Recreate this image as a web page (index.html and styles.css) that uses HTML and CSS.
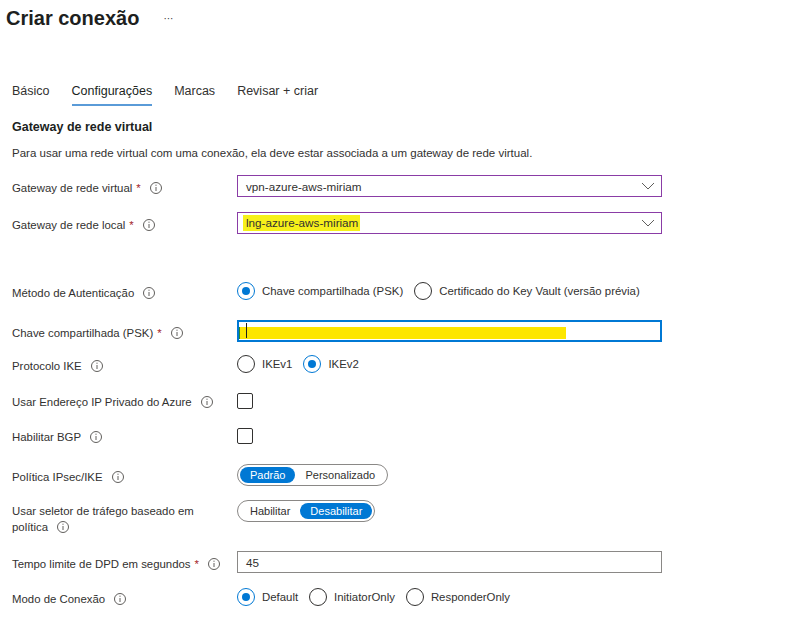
FILE: index.html
```html
<!DOCTYPE html>
<html lang="pt">
<head>
<meta charset="utf-8">
<title>Criar conexão</title>
<link rel="stylesheet" href="styles.css">
</head>
<body>
<header class="title-bar">
  <h1 class="title">Criar conexão</h1>
  <span class="more">···</span>
</header>

<nav class="tabs">
  <span class="tab">Básico</span>
  <span class="tab active">Configurações</span>
  <span class="tab">Marcas</span>
  <span class="tab">Revisar + criar</span>
</nav>

<main class="form">
  <h2 class="section-title">Gateway de rede virtual</h2>
  <p class="desc">Para usar uma rede virtual com uma conexão, ela deve estar associada a um gateway de rede virtual.</p>

  <div class="row row-1">
    <div class="label">Gateway de rede virtual<span class="req">*</span><svg class="info" viewBox="0 0 12 12"><circle cx="6" cy="6" r="5.5"/><line x1="6" y1="5" x2="6" y2="9"/><circle class="dot" cx="6" cy="3.2" r="0.6"/></svg></div>
    <div class="control select purple"><span class="value-wrap"><span class="value">vpn-azure-aws-miriam</span></span><svg class="chev" viewBox="0 0 14 8"><polyline points="1,1 7,7 13,1"/></svg></div>
  </div>

  <div class="row row-2">
    <div class="label">Gateway de rede local<span class="req">*</span><svg class="info" viewBox="0 0 12 12"><circle cx="6" cy="6" r="5.5"/><line x1="6" y1="5" x2="6" y2="9"/><circle class="dot" cx="6" cy="3.2" r="0.6"/></svg></div>
    <div class="control select purple"><span class="value-wrap"><span class="value hl">lng-azure-aws-miriam</span></span><svg class="chev" viewBox="0 0 14 8"><polyline points="1,1 7,7 13,1"/></svg></div>
  </div>

  <div class="row row-3">
    <div class="label">Método de Autenticação<svg class="info" viewBox="0 0 12 12"><circle cx="6" cy="6" r="5.5"/><line x1="6" y1="5" x2="6" y2="9"/><circle class="dot" cx="6" cy="3.2" r="0.6"/></svg></div>
    <div class="radios">
      <span class="radio checked"><i></i>Chave compartilhada (PSK)</span>
      <span class="radio"><i></i>Certificado do Key Vault (versão prévia)</span>
    </div>
  </div>

  <div class="row row-4">
    <div class="label">Chave compartilhada (PSK)<span class="req">*</span><svg class="info" viewBox="0 0 12 12"><circle cx="6" cy="6" r="5.5"/><line x1="6" y1="5" x2="6" y2="9"/><circle class="dot" cx="6" cy="3.2" r="0.6"/></svg></div>
    <div class="control text focus"><span class="yellow"></span><span class="caret"></span></div>
  </div>

  <div class="row row-5">
    <div class="label">Protocolo IKE<svg class="info" viewBox="0 0 12 12"><circle cx="6" cy="6" r="5.5"/><line x1="6" y1="5" x2="6" y2="9"/><circle class="dot" cx="6" cy="3.2" r="0.6"/></svg></div>
    <div class="radios">
      <span class="radio"><i></i>IKEv1</span>
      <span class="radio checked"><i></i>IKEv2</span>
    </div>
  </div>

  <div class="row row-6">
    <div class="label">Usar Endereço IP Privado do Azure<svg class="info" viewBox="0 0 12 12"><circle cx="6" cy="6" r="5.5"/><line x1="6" y1="5" x2="6" y2="9"/><circle class="dot" cx="6" cy="3.2" r="0.6"/></svg></div>
    <span class="checkbox"></span>
  </div>

  <div class="row row-7">
    <div class="label">Habilitar BGP<svg class="info" viewBox="0 0 12 12"><circle cx="6" cy="6" r="5.5"/><line x1="6" y1="5" x2="6" y2="9"/><circle class="dot" cx="6" cy="3.2" r="0.6"/></svg></div>
    <span class="checkbox"></span>
  </div>

  <div class="row row-8">
    <div class="label">Política IPsec/IKE<svg class="info" viewBox="0 0 12 12"><circle cx="6" cy="6" r="5.5"/><line x1="6" y1="5" x2="6" y2="9"/><circle class="dot" cx="6" cy="3.2" r="0.6"/></svg></div>
    <div class="pill"><span class="opt on">Padrão</span><span class="opt">Personalizado</span></div>
  </div>

  <div class="row row-9 top">
    <div class="label multi">Usar seletor de tráfego baseado em política<svg class="info" viewBox="0 0 12 12"><circle cx="6" cy="6" r="5.5"/><line x1="6" y1="5" x2="6" y2="9"/><circle class="dot" cx="6" cy="3.2" r="0.6"/></svg></div>
    <div class="pill"><span class="opt">Habilitar</span><span class="opt on">Desabilitar</span></div>
  </div>

  <div class="row row-10">
    <div class="label">Tempo limite de DPD em segundos<span class="req">*</span><svg class="info" viewBox="0 0 12 12"><circle cx="6" cy="6" r="5.5"/><line x1="6" y1="5" x2="6" y2="9"/><circle class="dot" cx="6" cy="3.2" r="0.6"/></svg></div>
    <div class="control text"><span class="value">45</span></div>
  </div>

  <div class="row row-11">
    <div class="label">Modo de Conexão<svg class="info" viewBox="0 0 12 12"><circle cx="6" cy="6" r="5.5"/><line x1="6" y1="5" x2="6" y2="9"/><circle class="dot" cx="6" cy="3.2" r="0.6"/></svg></div>
    <div class="radios">
      <span class="radio checked"><i></i>Default</span>
      <span class="radio"><i></i>InitiatorOnly</span>
      <span class="radio"><i></i>ResponderOnly</span>
    </div>
  </div>
</main>
</body>
</html>
```

FILE: styles.css
```css
* { box-sizing: border-box; }
html, body { margin: 0; padding: 0; background: #fff; }
body {
  font-family: "Liberation Sans", Arial, sans-serif;
  font-size: 11.4px;
  color: #323130;
}

.title-bar {
  display: flex;
  align-items: center;
  height: 36px;
  padding-left: 6px;
}
.title {
  margin: 0;
  font-size: 20px;
  font-weight: 600;
  line-height: 24px;
  color: #201f1e;
}
.more {
  margin-left: 24px;
  font-size: 10px;
  color: #323130;
}

.tabs {
  display: flex;
  gap: 22px;
  margin-top: 47px;
  padding-left: 12px;
}
.tab {
  font-size: 12.5px;
  line-height: 16px;
  padding-bottom: 5px;
  border-bottom: 2px solid transparent;
}
.tab.active {
  border-bottom-color: #5a9bd8;
  color: #201f1e;
}

.form { padding-left: 12px; }
.section-title {
  margin: 13px 0 0;
  font-size: 12.5px;
  font-weight: 600;
  line-height: 16px;
  color: #201f1e;
}
.desc {
  margin: 10px 0 0;
  font-size: 11.5px;
  line-height: 16px;
}

.row {
  display: flex;
  align-items: center;
}
.row.top { align-items: flex-start; }
.row-1 { margin-top: 14px; }
.row-2 { margin-top: 15px; }
.row-3 { margin-top: 47px; }
.row-4 { margin-top: 19px; }
.row-5 { margin-top: 12px; }
.row-6 { margin-top: 17px; }
.row-7 { margin-top: 16px; }
.row-8 { margin-top: 19px; }
.row-9 { margin-top: 14px; }
.row-10 { margin-top: 16px; }
.row-11 { margin-top: 14px; }

.label {
  width: 225px;
  flex: none;
  line-height: 16px;
  padding-top: 3px;
}
.label.multi {
  padding-top: 3px;
  padding-right: 30px;
}
.req {
  color: #a4262c;
  margin-left: 4px;
}
.info {
  width: 12px;
  height: 12px;
  margin-left: 9px;
  vertical-align: -2px;
  fill: none;
  stroke: #605e5c;
  stroke-width: 1;
}
.info .dot { fill: #605e5c; stroke: none; }

.control {
  width: 425px;
  height: 22px;
  display: flex;
  align-items: center;
  padding-left: 8px;
  border: 1px solid #8a8886;
  position: relative;
  font-size: 11.7px;
}
.control.purple { border-color: #8a3ca6; }
.value-wrap { flex: 1; }
.value.hl {
  display: inline-block;
  background: #f7f01a;
  line-height: 16px;
  padding: 0 2px 0 3px;
  margin-left: -3px;
}
.chev {
  width: 14px;
  height: 8px;
  margin-right: 6px;
  fill: none;
  stroke: #605e5c;
  stroke-width: 1;
}
.control.text.focus {
  border: 2px solid #0078d4;
  padding-left: 0;
}
.yellow {
  position: absolute;
  left: 0;
  top: 5px;
  width: 327px;
  height: 12px;
  background: #fde600;
  border-left: 1px solid #2a8a2a;
}
.caret {
  position: absolute;
  left: 7px;
  top: 1px;
  width: 1px;
  height: 15px;
  background: #201f1e;
}

.radios { display: flex; align-items: center; }
.radio {
  display: inline-flex;
  align-items: center;
  margin-right: 11px;
  line-height: 20px;
}
.radio i {
  width: 18px;
  height: 18px;
  border: 1px solid #323130;
  border-radius: 50%;
  margin-right: 7px;
  display: inline-flex;
  align-items: center;
  justify-content: center;
}
.radio.checked i { border-color: #0078d4; }
.radio.checked i::after {
  content: "";
  width: 8px;
  height: 8px;
  border-radius: 50%;
  background: #0078d4;
}

.checkbox {
  width: 16px;
  height: 16px;
  border: 1px solid #323130;
  border-radius: 2px;
}

.pill {
  display: inline-flex;
  align-items: center;
  height: 22px;
  padding: 0 2px;
  border: 1px solid #8a8886;
  border-radius: 11px;
  font-size: 11px;
}
.opt {
  height: 16px;
  line-height: 16px;
  padding: 0 10px;
  border-radius: 8px;
}
.opt.on {
  background: #0078d4;
  color: #fff;
}
```
